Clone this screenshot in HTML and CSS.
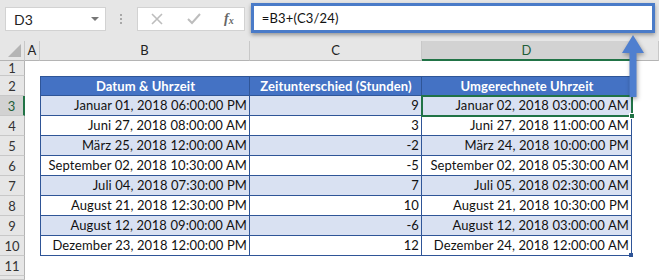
FILE: index.html
```html
<!DOCTYPE html>
<html lang="de">
<head>
<meta charset="utf-8">
<link rel="stylesheet" href="styles.css">
</head>
<body>
<div class="app">
  <div class="toolbar">
    <div class="namebox"><span>D3</span><span class="caret"></span></div>
    <div class="grip"><i></i><i></i><i></i></div>
    <div class="fxbox">
      <svg class="ic" width="14" height="14" viewBox="0 0 14 14"><path d="M2 2L12 12M12 2L2 12" stroke="#bdbdbd" stroke-width="1.6" fill="none"/></svg>
      <svg class="ic" width="16" height="14" viewBox="0 0 16 14"><path d="M2 7L6 11L14 2" stroke="#bdbdbd" stroke-width="2" fill="none"/></svg>
      <span class="fx">f<sub>x</sub></span>
    </div>
    <div class="formula">=B3+(C3/24)</div>
  </div>
  <div class="gap"></div>
  <div class="sheet">
    <div class="ch corner"><span class="tri"></span></div>
    <div class="ch">A</div>
    <div class="ch">B</div>
    <div class="ch">C</div>
    <div class="ch sel">D</div>
    <div class="ch"></div>

    <div class="rh">1</div><div></div><div></div><div></div><div></div><div></div>

    <div class="rh">2</div><div></div>
    <div class="c hd first top">Datum &amp; Uhrzeit</div>
    <div class="c hd top">Zeitunterschied (Stunden)</div>
    <div class="c hd top">Umgerechnete Uhrzeit</div><div></div>

    <div class="rh rsel">3</div><div></div>
    <div class="c alt first">Januar 01, 2018 06:00:00 PM</div>
    <div class="c alt">9</div>
    <div class="c alt active">Januar 02, 2018 03:00:00 AM<span class="handle"></span></div><div></div>

    <div class="rh">4</div><div></div>
    <div class="c first">Juni 27, 2018 08:00:00 AM</div>
    <div class="c">3</div>
    <div class="c">Juni 27, 2018 11:00:00 AM</div><div></div>

    <div class="rh">5</div><div></div>
    <div class="c alt first">März 25, 2018 12:00:00 AM</div>
    <div class="c alt">-2</div>
    <div class="c alt">März 24, 2018 10:00:00 PM</div><div></div>

    <div class="rh">6</div><div></div>
    <div class="c first">September 02, 2018 10:30:00 AM</div>
    <div class="c">-5</div>
    <div class="c">September 02, 2018 05:30:00 AM</div><div></div>

    <div class="rh">7</div><div></div>
    <div class="c alt first">Juli 04, 2018 07:30:00 PM</div>
    <div class="c alt">7</div>
    <div class="c alt">Juli 05, 2018 02:30:00 AM</div><div></div>

    <div class="rh">8</div><div></div>
    <div class="c first">August 21, 2018 12:30:00 PM</div>
    <div class="c">10</div>
    <div class="c">August 21, 2018 10:30:00 PM</div><div></div>

    <div class="rh">9</div><div></div>
    <div class="c alt first">August 12, 2018 09:00:00 AM</div>
    <div class="c alt">-6</div>
    <div class="c alt">August 12, 2018 03:00:00 AM</div><div></div>

    <div class="rh">10</div><div></div>
    <div class="c first">Dezember 23, 2018 12:00:00 PM</div>
    <div class="c">12</div>
    <div class="c last">Dezember 24, 2018 12:00:00 AM</div><div></div>

    <div class="rh">11</div><div></div><div></div><div></div><div></div><div></div>
    <div class="rh"></div><div></div><div></div><div></div><div></div><div></div>
  </div>
  <div class="arrow">
    <svg width="30" height="70" viewBox="0 0 30 70"><path d="M15 0L26 18H18.5V62H11.5V18H4Z" fill="#4f7fcf"/></svg>
  </div>
</div>
</body>
</html>
```

FILE: styles.css
```css
* { box-sizing: border-box; }
html, body { margin: 0; padding: 0; }
body { width: 659px; height: 280px; overflow: hidden; background: #fff; font-family: "Lato", "Liberation Sans", sans-serif; }
.app { position: relative; width: 659px; height: 280px; overflow: hidden; background: #e6e6e6; }
.toolbar { display: flex; align-items: flex-start; height: 34px; padding: 3px 4px 0 5px; }
.namebox { margin-top: 4px; width: 101px; height: 24px; background: #fff; border: 1px solid #d2d2d2; display: flex; align-items: center; justify-content: space-between; padding: 0 6px 0 8px; font-size: 14px; color: #222; }
.caret { width: 0; height: 0; border-left: 4px solid transparent; border-right: 4px solid transparent; border-top: 4px solid #777; }
.grip { width: 31px; display: flex; flex-direction: column; align-items: center; gap: 2px; margin-top: 11px; }
.grip i { display: block; width: 2px; height: 2px; background: #a8a8a8; }
.fxbox { margin-top: 4px; width: 108px; height: 24px; background: #fff; border: 1px solid #d2d2d2; display: flex; align-items: center; justify-content: space-between; padding: 0 10px 0 12px; }
.fx { font-family: "Liberation Serif", serif; font-style: italic; font-weight: bold; font-size: 14px; color: #666; }
.fx sub { font-size: 10px; vertical-align: -1px; }
.formula { margin-left: 6px; width: 405px; height: 30px; border: 3px solid #4a7bc8; background: #fff; box-shadow: 0 2px 4px rgba(0,0,0,0.35); font-size: 13px; letter-spacing: 0.2px; color: #111; padding: 4px 0 0 8px; }
.gap { height: 7px; }
.sheet { display: grid; grid-template-columns: 25px 15px 210px 172px 210px 27px; grid-template-rows: 20px 15px repeat(10, 20px) 4px; background: #fff; }
.ch { background: #e6e6e6; border-right: 1px solid #c8c8c8; border-bottom: 1px solid #b4b4b4; font-size: 13px; color: #222; text-align: center; line-height: 19px; }
.ch.sel { background: #d2d2d2; border-bottom: 2px solid #217346; color: #1f5e38; }
.corner { position: relative; }
.tri { position: absolute; right: 3px; bottom: 3px; width: 0; height: 0; border-left: 13px solid transparent; border-bottom: 13px solid #b4b4b4; }
.rh { background: #e6e6e6; border-right: 1px solid #b4b4b4; border-bottom: 1px solid #c8c8c8; font-size: 13px; color: #333; text-align: center; display: flex; align-items: center; justify-content: center; }
.rh.rsel { background: #d2d2d2; border-right: 2px solid #217346; color: #1f5e38; }
.c { border-right: 1px solid #2f5597; border-bottom: 1px solid #2f5597; font-size: 13px; letter-spacing: 0.1px; color: #111; text-align: right; padding: 0 2px 0 3px; line-height: 19px; white-space: nowrap; overflow: hidden; }
.c.first { border-left: 1px solid #2f5597; }
.c.top { border-top: 1px solid #2f5597; }
.c.hd { background: #4472c4; color: #fff; font-weight: bold; text-align: center; line-height: 18px; }
.c.alt { background: #d9e1f2; }
.c.active { position: relative; overflow: visible; }
.c.active::after { content: ""; position: absolute; left: -1px; top: -1px; right: -2px; bottom: -2px; border: 2px solid #217346; }
.handle { position: absolute; right: -4px; bottom: -4px; width: 6px; height: 6px; background: #217346; border: 1px solid #fff; z-index: 2; }
.c.last { position: relative; overflow: visible; }
.c.last::after { content: ""; position: absolute; right: -2px; bottom: -2px; width: 4px; height: 4px; background: #2f5597; }
.arrow { position: absolute; left: 618px; top: 35px; width: 30px; height: 70px; filter: drop-shadow(1px 2px 2px rgba(0,0,0,0.35)); }
```
